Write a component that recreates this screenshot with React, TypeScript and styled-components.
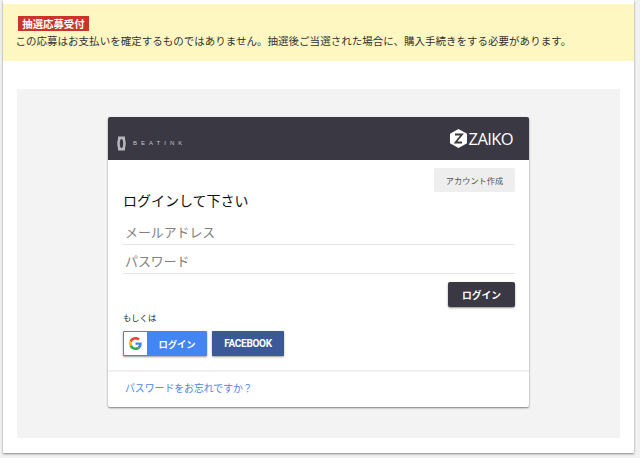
import React, { FC } from "react";
import styled, { createGlobalStyle } from "styled-components";

const GlobalStyle = createGlobalStyle`
  html, body {
    margin: 0;
    padding: 0;
    width: 640px;
    height: 458px;
    overflow: hidden;
    background: #f1f1f1;
    font-family: "Noto Sans CJK JP", "Liberation Sans", sans-serif;
  }
  * {
    box-sizing: border-box;
  }
`;

const Sheet = styled.div`
  width: 631px;
  height: 453px;
  margin-left: 3px;
  padding-top: 4px;
  background: #fff;
  box-shadow: 0 1px 2px rgba(0, 0, 0, 0.45);
`;

const Banner = styled.div`
  height: 57px;
  padding: 12px 0 0 12.5px;
  background: #fef7c1;
`;

const Badge = styled.div`
  width: fit-content;
  height: 15px;
  margin-left: 2.5px;
  padding: 0 4.3px;
  background: #c9342b;
  color: #fff;
  font-size: 10.4px;
  font-weight: 700;
  line-height: 15px;
`;

const Notice = styled.p`
  margin: 2px 0 0;
  color: #333;
  font-size: 10.53px;
  line-height: 15px;
  white-space: nowrap;
`;

const Panel = styled.div`
  height: 349px;
  margin: 28px 14px 0;
  padding-top: 28px;
  background: #f3f3f3;
`;

const Card = styled.div`
  width: 421px;
  height: 290px;
  margin-left: 91px;
  border-radius: 2px;
  background: #fff;
  box-shadow: 0 1px 2px rgba(0, 0, 0, 0.5);
`;

const CardHeader = styled.div`
  display: flex;
  align-items: center;
  justify-content: space-between;
  height: 43px;
  padding: 0 16px 0 9px;
  border-radius: 2px 2px 0 0;
  background: #3a3843;
`;

const BeatinkLogo = styled.div`
  display: flex;
  align-items: center;
  gap: 7px;
  margin-top: 9px;
  color: #c4c4c8;
  font-family: "Liberation Sans", sans-serif;
  font-size: 6px;
  letter-spacing: 4px;
`;

const ZaikoLogo = styled.div`
  display: flex;
  align-items: center;
  gap: 1px;
  color: #fff;
  font-family: "Open Sans", "Liberation Sans", sans-serif;
  font-size: 16.5px;
  letter-spacing: -0.6px;
  line-height: 20px;
`;

const CardBody = styled.div`
  height: 212px;
  padding: 8px 14px 0 15px;
  border-bottom: 2px solid #efefef;
`;

const TopRow = styled.div`
  display: flex;
  justify-content: flex-end;
`;

const AccountButton = styled.button`
  width: 81px;
  height: 24px;
  padding: 0;
  border: 0;
  border-radius: 2px;
  background: #eee;
  color: #555;
  font: inherit;
  font-size: 8.2px;
`;

const Title = styled.h1`
  margin: -2px 0 0;
  color: #111;
  font-size: 14px;
  font-weight: 400;
  line-height: 20px;
`;

const Field = styled.div`
  height: 29px;
  padding: 4px 0 0 2px;
  border-bottom: 1px solid #e4e4e4;
  color: #808080;
  font-size: 12.9px;
  line-height: 24px;
`;

const FirstField = styled(Field)`
  height: 34px;
  margin-top: 1px;
  padding-top: 9px;
`;

const SubmitRow = styled.div`
  display: flex;
  justify-content: flex-end;
  margin-top: 8px;
`;

const SubmitButton = styled.button`
  width: 67px;
  height: 25px;
  padding: 0;
  border: 0;
  border-radius: 2px;
  background: #3a3843;
  box-shadow: 0 1px 2px rgba(0, 0, 0, 0.45);
  color: #fff;
  font: inherit;
  font-size: 9.8px;
  font-weight: 700;
`;

const OrLabel = styled.div`
  margin-top: 4px;
  color: #222;
  font-size: 8.3px;
  line-height: 12px;
`;

const SocialRow = styled.div`
  display: flex;
  gap: 5px;
  margin-top: 8px;
`;

const SocialButton = styled.button<{ $bg: string; $width: number }>`
  display: flex;
  align-items: center;
  width: ${(p) => p.$width}px;
  height: 25px;
  padding: 0;
  border: 0;
  border-radius: 1px;
  background: ${(p) => p.$bg};
  box-shadow: 0 1px 2px rgba(0, 0, 0, 0.4);
  color: #fff;
  font: inherit;
  font-weight: 700;
`;

const GoogleMark = styled.span`
  display: flex;
  align-items: center;
  justify-content: center;
  width: 23px;
  height: 23px;
  margin-left: 1px;
  background: #fff;
`;

const GoogleLabel = styled.span`
  flex: 1;
  font-size: 9.3px;
  text-align: center;
`;

const FacebookLabel = styled.span`
  flex: 1;
  font-family: Roboto, "Liberation Sans", sans-serif;
  font-size: 10px;
  letter-spacing: -0.3px;
  text-align: center;
`;

const Footer = styled.div`
  padding: 9px 0 0 17px;
`;

const ForgotLink = styled.a`
  display: block;
  color: #4a86e8;
  font-size: 9.85px;
  line-height: 15px;
`;

const App: FC = () => {
  return (
    <>
      <GlobalStyle />
      <Sheet>
        <Banner>
          <Badge>抽選応募受付</Badge>
          <Notice>
            この応募はお支払いを確定するものではありません。抽選後ご当選された場合に、購入手続きをする必要があります。
          </Notice>
        </Banner>
        <Panel>
          <Card>
            <CardHeader>
              <BeatinkLogo>
                <svg width="9" height="15" viewBox="0 0 9 15">
                  <path
                    fillRule="evenodd"
                    d="M1 0.5h7C7.600 3 8.800 5 8.800 7.500S7.600 12 8 14.500H1C1.400 12 0.200 10 0.200 7.500S1.400 3 1 0.500zM4.500 3C3.300 3 2.800 5 2.800 7.500S3.300 12 4.500 12 6.200 10 6.200 7.500 5.700 3 4.500 3z"
                    fill="#b8b8bb"
                  />
                </svg>
                BEATINK
              </BeatinkLogo>
              <ZaikoLogo>
                <svg width="19" height="19" viewBox="0 0 19 19">
                  <path d="M9.500 0 18 4.700V14.300L9.500 19 1 14.300V4.700z" fill="#fff" />
                  <path d="M6 5.500h7L6.500 13.500h6.500" fill="none" stroke="#3a3843" strokeWidth="1.800" />
                </svg>
                ZAIKO
              </ZaikoLogo>
            </CardHeader>
            <CardBody>
              <TopRow>
                <AccountButton>アカウント作成</AccountButton>
              </TopRow>
              <Title>ログインして下さい</Title>
              <FirstField>メールアドレス</FirstField>
              <Field>パスワード</Field>
              <SubmitRow>
                <SubmitButton>ログイン</SubmitButton>
              </SubmitRow>
              <OrLabel>もしくは</OrLabel>
              <SocialRow>
                <SocialButton $bg="#4285f4" $width={84}>
                  <GoogleMark>
                    <svg width="13" height="13" viewBox="0 0 48 48">
                      <path fill="#EA4335" d="M24 9.500c3.500 0 6.700 1.200 9.200 3.600l6.900-6.900C35.900 2.400 30.500 0 24 0 14.600 0 6.500 5.400 2.600 13.200l8 6.200C12.500 13.700 17.800 9.500 24 9.500z" />
                      <path fill="#4285F4" d="M47 24.500c0-1.600-.1-3.100-.4-4.500H24v9h13c-.6 3-2.200 5.500-4.800 7.200l7.700 6C44.400 37.900 47 31.800 47 24.500z" />
                      <path fill="#FBBC05" d="M10.600 28.600c-.5-1.500-.8-3-.8-4.600s.3-3.200.8-4.600l-8-6.200C.9 16.500 0 20.100 0 24s.9 7.500 2.600 10.800l8-6.200z" />
                      <path fill="#34A853" d="M24 48c6.500 0 11.900-2.100 15.900-5.800l-7.700-6c-2.200 1.400-4.900 2.300-8.200 2.300-6.200 0-11.500-4.200-13.400-9.900l-8 6.200C6.500 42.600 14.600 48 24 48z" />
                    </svg>
                  </GoogleMark>
                  <GoogleLabel>ログイン</GoogleLabel>
                </SocialButton>
                <SocialButton $bg="#3b5998" $width={72}>
                  <FacebookLabel>FACEBOOK</FacebookLabel>
                </SocialButton>
              </SocialRow>
            </CardBody>
            <Footer>
              <ForgotLink>パスワードをお忘れですか？</ForgotLink>
            </Footer>
          </Card>
        </Panel>
      </Sheet>
    </>
  );
};

export default App;
